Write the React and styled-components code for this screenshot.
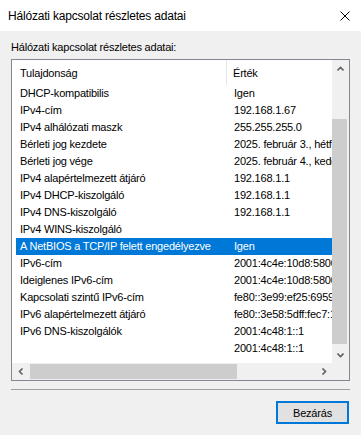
import React from "react";
import styled, { createGlobalStyle } from "styled-components";

const GlobalStyle = createGlobalStyle`
  html, body {
    margin: 0;
    padding: 0;
    background: #f0f0f0;
  }
  body {
    font-family: "Liberation Sans", Arial, sans-serif;
    font-size: 11px;
    letter-spacing: -0.2px;
    color: #000;
  }
`;

const Window = styled.div`
  width: 361px;
  height: 435px;
  background: #f0f0f0;
  display: flex;
  flex-direction: column;
  overflow: hidden;
`;

const TitleBar = styled.div`
  height: 31px;
  flex: none;
  background: #fff;
  display: flex;
  align-items: center;
  justify-content: space-between;
  padding: 0 11px 0 8px;
`;

const Title = styled.span`
  font-size: 12px;
  letter-spacing: -0.2px;
`;

const Body = styled.div`
  padding: 8px 11px 0 11px;
  display: flex;
  flex-direction: column;
`;

const Label = styled.div`
  height: 17px;
  line-height: 17px;
  margin-bottom: 3px;
`;

const ListBox = styled.div`
  height: 322px;
  box-sizing: border-box;
  border: 1px solid #828790;
  background: #fff;
  display: grid;
  grid-template-columns: 1fr 17px;
  grid-template-rows: 1fr 17px;
`;

const Viewport = styled.div`
  overflow: hidden;
  position: relative;
`;

const Header = styled.div`
  height: 25px;
  display: grid;
  grid-template-columns: 211px 1fr;
  margin-left: 4px;
  align-items: stretch;
`;

const HeaderCell = styled.div`
  display: flex;
  align-items: center;
  padding-left: ${(p) => (p.$first ? "4px" : "6px")};
  border-right: ${(p) => (p.$first ? "1px solid #e5e5e5" : "none")};
  white-space: nowrap;
`;

const Row = styled.div`
  height: 17px;
  line-height: 17px;
  display: grid;
  grid-template-columns: 211px 1fr;
  margin-left: 4px;
  background: ${(p) => (p.$selected ? "#0078d7" : "transparent")};
  color: ${(p) => (p.$selected ? "#fff" : "#000")};
  white-space: nowrap;
`;

const Cell = styled.div`
  padding-left: ${(p) => (p.$first ? "4px" : "7px")};
  overflow: hidden;
`;

const VScroll = styled.div`
  background: #f0f0f0;
  display: flex;
  flex-direction: column;
`;

const HScroll = styled.div`
  background: #f0f0f0;
  display: flex;
  align-items: stretch;
`;

const Corner = styled.div`
  background: #f0f0f0;
`;

const ArrowBox = styled.div`
  flex: none;
  width: 17px;
  height: 17px;
  display: flex;
  align-items: center;
  justify-content: center;
`;

const VTrack = styled.div`
  flex: 1;
  padding-top: 42px;
  padding-bottom: 2px;
  display: flex;
  flex-direction: column;
`;

const VThumb = styled.div`
  flex: 1;
  width: 15px;
  margin-left: 0;
  background: #cdcdcd;
`;

const HTrack = styled.div`
  flex: 1;
  padding: 0 78px 0 1px;
  display: flex;
`;

const HThumb = styled.div`
  flex: 1;
  height: 15px;
  margin-top: 1px;
  background: #cdcdcd;
`;

const Separator = styled.div`
  height: 1px;
  background: #a0a0a0;
  margin-top: 8px;
`;

const Footer = styled.div`
  display: flex;
  justify-content: flex-end;
  padding-top: 11px;
`;

const Button = styled.button`
  width: 73px;
  height: 23px;
  box-sizing: border-box;
  border: 2px solid #0078d7;
  background: #e1e1e1;
  font-family: "Liberation Sans", Arial, sans-serif;
  font-size: 11px;
  letter-spacing: -0.2px;
  color: #000;
  padding: 0;
  margin-right: 1px;
`;

const Chevron = ({ dir }) => {
  const pts = {
    up: "0.5,4.5 3.5,1.5 6.5,4.5",
    down: "0.5,1.5 3.5,4.5 6.5,1.5",
  };
  const hpts = {
    left: "4.5,0.5 1.5,3.5 4.5,6.5",
    right: "1.5,0.5 4.5,3.5 1.5,6.5",
  };
  const vertical = dir === "up" || dir === "down";
  return (
    <svg
      width={vertical ? 7 : 6}
      height={vertical ? 6 : 7}
      viewBox={vertical ? "0 0 7 6" : "0 0 6 7"}
    >
      <polyline
        points={vertical ? pts[dir] : hpts[dir]}
        fill="none"
        stroke="#606060"
        strokeWidth="1.6"
      />
    </svg>
  );
};

const CloseIcon = () => (
  <svg width="10" height="10" viewBox="0 0 10 10">
    <path d="M0.5 0.5 L9.5 9.5 M9.5 0.5 L0.5 9.5" stroke="#000" strokeWidth="1" />
  </svg>
);

const rows = [
  ["DHCP-kompatibilis", "Igen"],
  ["IPv4-cím", "192.168.1.67"],
  ["IPv4 alhálózati maszk", "255.255.255.0"],
  ["Bérleti jog kezdete", "2025. február 3., hétfő 8:12:31"],
  ["Bérleti jog vége", "2025. február 4., kedd 8:12:31"],
  ["IPv4 alapértelmezett átjáró", "192.168.1.1"],
  ["IPv4 DHCP-kiszolgáló", "192.168.1.1"],
  ["IPv4 DNS-kiszolgáló", "192.168.1.1"],
  ["IPv4 WINS-kiszolgáló", ""],
  ["A NetBIOS a TCP/IP felett engedélyezve", "Igen"],
  ["IPv6-cím", "2001:4c4e:10d8:5800:1234:5678"],
  ["Ideiglenes IPv6-cím", "2001:4c4e:10d8:5800:abcd:ef01"],
  ["Kapcsolati szintű IPv6-cím", "fe80::3e99:ef25:6959:1a2b%12"],
  ["IPv6 alapértelmezett átjáró", "fe80::3e58:5dff:fec7:1234%12"],
  ["IPv6 DNS-kiszolgálók", "2001:4c48:1::1"],
  ["", "2001:4c48:1::1"],
];

export default function App() {
  return (
    <>
      <GlobalStyle />
      <Window>
        <TitleBar>
          <Title>Hálózati kapcsolat részletes adatai</Title>
          <CloseIcon />
        </TitleBar>
        <Body>
          <Label>Hálózati kapcsolat részletes adatai:</Label>
          <ListBox>
            <Viewport>
              <Header>
                <HeaderCell $first>Tulajdonság</HeaderCell>
                <HeaderCell>Érték</HeaderCell>
              </Header>
              {rows.map(([k, v], i) => (
                <Row key={i} $selected={i === 9}>
                  <Cell $first>{k}</Cell>
                  <Cell>{v}</Cell>
                </Row>
              ))}
            </Viewport>
            <VScroll>
              <ArrowBox>
                <Chevron dir="up" />
              </ArrowBox>
              <VTrack>
                <VThumb />
              </VTrack>
              <ArrowBox>
                <Chevron dir="down" />
              </ArrowBox>
            </VScroll>
            <HScroll>
              <ArrowBox>
                <Chevron dir="left" />
              </ArrowBox>
              <HTrack>
                <HThumb />
              </HTrack>
              <ArrowBox>
                <Chevron dir="right" />
              </ArrowBox>
            </HScroll>
            <Corner />
          </ListBox>
          <Separator />
          <Footer>
            <Button>Bezárás</Button>
          </Footer>
        </Body>
      </Window>
    </>
  );
}
